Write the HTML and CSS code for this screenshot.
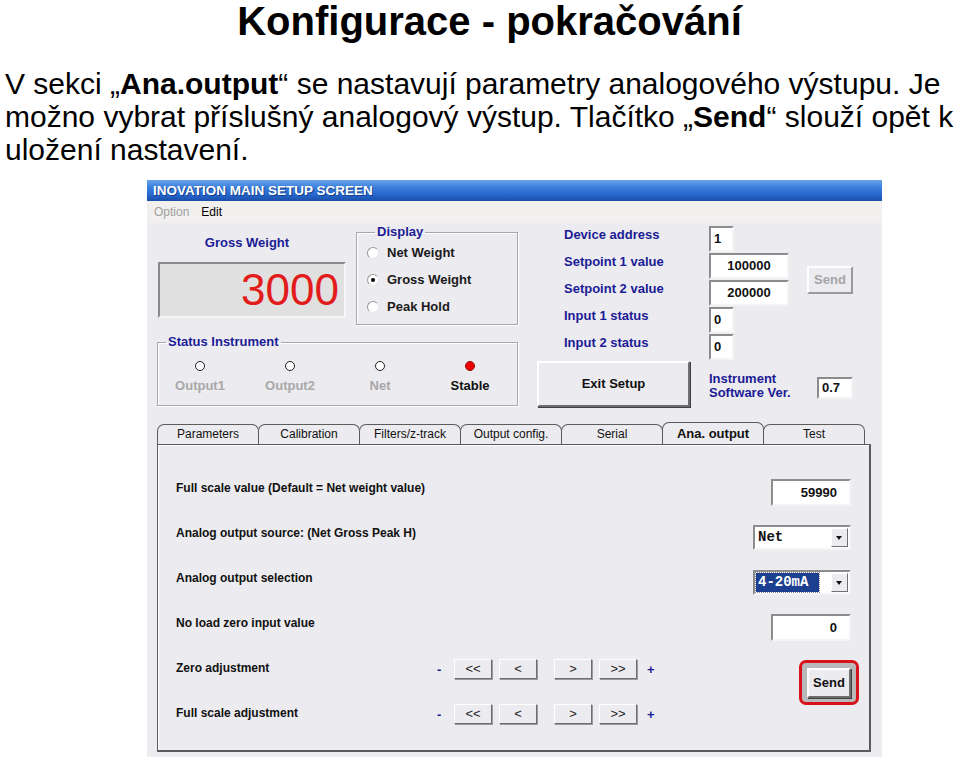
FILE: index.html
```html
<!DOCTYPE html>
<html lang="cs">
<head>
<meta charset="utf-8">
<title>Konfigurace - pokračování</title>
<link rel="stylesheet" href="styles.css">
</head>
<body>
<div class="slide">
  <h1 class="title">Konfigurace - pokračování</h1>
  <p class="lead">V sekci „<b>Ana.output</b>“ se nastavují parametry analogového výstupu. Je<br>možno vybrat příslušný analogový výstup. Tlačítko „<b>Send</b>“ slouží opět k<br>uložení nastavení.</p>

  <div class="window">
    <div class="titlebar">INOVATION MAIN SETUP SCREEN</div>
    <div class="menubar"><span class="dis">Option</span><span>Edit</span></div>
    <div class="client">
      <div class="top">
        <div class="left">
          <div class="row1">
            <div class="gross">
              <div class="glabel">Gross Weight</div>
              <div class="readout">3000</div>
            </div>
            <fieldset class="group display">
              <legend>Display</legend>
              <div class="radio"><span class="rb"></span>Net Weight</div>
              <div class="radio"><span class="rb on"></span>Gross Weight</div>
              <div class="radio"><span class="rb"></span>Peak Hold</div>
            </fieldset>
          </div>
          <fieldset class="group status">
            <legend>Status Instrument</legend>
            <div class="leds">
              <div class="led"><span class="dot"></span><span class="ltxt">Output1</span></div>
              <div class="led"><span class="dot"></span><span class="ltxt">Output2</span></div>
              <div class="led"><span class="dot"></span><span class="ltxt">Net</span></div>
              <div class="led"><span class="dot red"></span><span class="ltxt act">Stable</span></div>
            </div>
          </fieldset>
        </div>
        <div class="right">
          <div class="flabel">Device address</div><div class="box w25">1</div>
          <div class="flabel">Setpoint 1 value</div><div class="box w80 c">100000</div>
          <div class="btn send-dis">Send</div>
          <div class="flabel">Setpoint 2 value</div><div class="box w80 c">200000</div>
          <div class="flabel">Input 1 status</div><div class="box w25">0</div>
          <div class="flabel">Input 2 status</div><div class="box w25">0</div>
          <div class="btn exit">Exit Setup</div>
          <div class="ver">Instrument<br>Software Ver.</div>
          <div class="box verbox">0.7</div>
        </div>
      </div>

      <div class="tabs">
        <div class="tab">Parameters</div>
        <div class="tab">Calibration</div>
        <div class="tab">Filters/z-track</div>
        <div class="tab">Output config.</div>
        <div class="tab">Serial</div>
        <div class="tab active">Ana. output</div>
        <div class="tab">Test</div>
      </div>
      <div class="panel">
        <div class="plabel r1">Full scale value (Default = Net weight value)</div>
        <div class="box pin r1">59990</div>
        <div class="plabel r2">Analog output source: (Net Gross Peak H)</div>
        <div class="select r2"><span class="sval">Net</span><span class="arrow"></span></div>
        <div class="plabel r3">Analog output selection</div>
        <div class="select r3"><span class="sval hl">4-20mA</span><span class="arrow"></span></div>
        <div class="plabel r4">No load zero input value</div>
        <div class="box pin r4">0</div>
        <div class="plabel r5">Zero adjustment</div>
        <div class="adj r5"><span class="sign">-</span><span class="abtn">&lt;&lt;</span><span class="abtn">&lt;</span><span class="abtn sp">&gt;</span><span class="abtn">&gt;&gt;</span><span class="sign plus">+</span></div>
        <div class="plabel r6">Full scale adjustment</div>
        <div class="adj r6"><span class="sign">-</span><span class="abtn">&lt;&lt;</span><span class="abtn">&lt;</span><span class="abtn sp">&gt;</span><span class="abtn">&gt;&gt;</span><span class="sign plus">+</span></div>
        <div class="sendwrap"><div class="btn send">Send</div></div>
      </div>
    </div>
  </div>
</div>
</body>
</html>
```
FILE: styles.css
```css
* { box-sizing: border-box; }
body {
  margin: 0;
  background: #fff;
  font-family: "Liberation Sans", Arial, sans-serif;
  color: #000;
}
.slide { width: 960px; height: 763px; overflow: hidden; }
.title {
  margin: 0;
  padding: 0 0 0 19px;
  text-align: center;
  font-size: 40px;
  font-weight: bold;
  line-height: 42px;
}
.lead {
  margin: 25px 0 0;
  padding-left: 5px;
  font-size: 30px;
  line-height: 33px;
  white-space: nowrap;
}
.window {
  margin: 14px 0 0 147px;
  width: 735px;
  height: 577px;
  background: #ecebef;
}
.titlebar {
  height: 21px;
  background: linear-gradient(to bottom, #6aa4ea 0%, #3a7fdc 35%, #2462c8 75%, #1a4fa8 100%);
  color: #fff;
  font-weight: bold;
  font-size: 13.5px;
  line-height: 21px;
  padding-left: 6px;
  text-shadow: 1px 1px 0 #163e8a;
}
.menubar {
  height: 22px;
  background: #f1f0ee;
  font-size: 12px;
  line-height: 22px;
  padding-left: 7px;
  display: flex;
  gap: 12px;
}
.menubar .dis { color: #a0a0a0; }

.client { font-size: 13px; }
.top { display: flex; padding: 2px 0 0 10px; height: 199px; }
.left { width: 361px; }
.row1 { display: flex; }
.gross { width: 188px; margin-left: 1px; }
.glabel {
  color: #1b1b96;
  font-weight: bold;
  text-align: center;
  margin: 10px 0 0 -10px;
  line-height: 16px;
}
.readout {
  margin-top: 11px;
  height: 56px;
  background: #e0e0e0;
  border: 2px solid;
  border-color: #8a8a8a #f6f6f6 #f6f6f6 #8a8a8a;
  color: #e21b1b;
  font-size: 44px;
  line-height: 52px;
  text-align: right;
  padding-right: 5px;
}
.group {
  margin: 0;
  padding: 0;
  border: 1px solid #a9a9a9;
  box-shadow: inset 1px 1px 0 #fff, 1px 1px 0 #fff;
}
.group legend {
  margin-left: 8px;
  padding: 0 2px;
  color: #1b1b96;
  font-weight: bold;
  font-size: 13px;
  line-height: 14px;
}
.display { margin-left: 10px; width: 162px; height: 100px; padding: 0 0 0 10px; }
.radio { display: flex; align-items: center; height: 27px; font-weight: bold; color: #1a1a1a; }
.rb {
  width: 12px; height: 12px; border-radius: 50%;
  background: #fff;
  border: 1px solid #9a9a9a;
  border-right-color: #e8e8e8; border-bottom-color: #e8e8e8;
  margin-right: 8px;
  position: relative;
}
.rb.on::after {
  content: ""; position: absolute; left: 3px; top: 3px;
  width: 4px; height: 4px; border-radius: 50%; background: #000;
}
.status { margin-top: 10px; height: 71px; width: 361px; }
.leds { display: grid; grid-template-columns: repeat(4, 90px); margin: 12px 0 0 -3px; }
.led { display: flex; flex-direction: column; align-items: center; }
.dot { width: 10px; height: 10px; border-radius: 50%; border: 1px solid #222; background: #fff; }
.dot.red { background: #e00; border-color: #900; }
.ltxt { margin-top: 8px; font-weight: bold; color: #a8a8a8; line-height: 14px; }
.ltxt.act { color: #111; }

.right {
  margin-left: 19px;
  margin-top: 1px;
  display: grid;
  grid-template-columns: 172px 98px 46px;
  grid-template-rows: repeat(5, 27px) 47px;
}
.flabel {
  grid-column: 1;
  padding: 2px 0 0 27px;
  color: #1b1b96;
  font-weight: bold;
  line-height: 14px;
}
.box {
  background: #fff;
  border: 2px solid;
  border-color: #8c8c8c #f4f4f4 #f4f4f4 #8c8c8c;
  font-weight: bold;
  color: #111;
  height: 26px;
  line-height: 22px;
  padding: 0 3px;
}
.right .box { grid-column: 2; }
.w25 { width: 25px; }
.w80 { width: 80px; }
.c { text-align: center; }
.btn {
  background: #ecebef;
  border: 2px solid;
  border-color: #fff #6e6e6e #6e6e6e #fff;
  box-shadow: 1px 1px 0 #404040;
  font-weight: bold;
  text-align: center;
}
.send-dis {
  grid-column: 3; grid-row: 2 / 4;
  align-self: center;
  height: 28px; line-height: 24px;
  color: #a6a6a6;
  border-color: #fff #9a9a9a #9a9a9a #fff;
  box-shadow: none;
}
.exit {
  grid-column: 1; grid-row: 6;
  width: 153px; height: 46px; line-height: 42px;
  color: #111;
}
.ver { grid-column: 2 / 4; grid-row: 6; align-self: center; color: #1b1b96; font-weight: bold; line-height: 14px; margin-top: 2px; }
.right .verbox { grid-column: 3; grid-row: 6; justify-self: end; align-self: center; width: 36px; height: 22px; line-height: 18px; margin-top: 7px; }

.tabs { display: flex; padding-left: 10px; height: 22px; align-items: flex-end; }
.tab {
  width: 102px;
  height: 20px;
  border: 1px solid #5c5c5c;
  border-bottom: none;
  border-radius: 7px 7px 0 0;
  text-align: center;
  font-size: 12px;
  line-height: 19px;
  color: #111;
  background: #ecebef;
  margin-right: -1px;
}
.tab.active { height: 22px; font-weight: bold; font-size: 13px; line-height: 22px; position: relative; z-index: 1; }
.panel {
  margin-left: 10px;
  width: 714px;
  height: 308px;
  border: 1px solid #5a5a5a;
  border-right-width: 2px;
  border-bottom-width: 2px;
  box-shadow: inset 1px 1px 0 #fff;
  display: grid;
  grid-template-columns: 264px 220px 1fr;
  grid-template-rows: repeat(6, 45px);
  padding: 20px 18px 0 18px;
  align-items: center;
}
.plabel { grid-column: 1 / 3; font-weight: bold; font-size: 12px; color: #111; }
.r1 { grid-row: 1; } .r2 { grid-row: 2; } .r3 { grid-row: 3; }
.r4 { grid-row: 4; } .r5 { grid-row: 5; } .r6 { grid-row: 6; }
.plabel.r5, .plabel.r6 { grid-column: 1; }
.pin { grid-column: 3; justify-self: end; width: 80px; height: 27px; line-height: 23px; text-align: right; padding-right: 12px; margin-top: 10px; }
.select {
  grid-column: 3; justify-self: end;
  width: 98px; height: 25px;
  margin-top: 10px;
  background: #fff;
  border: 2px solid;
  border-color: #8c8c8c #f4f4f4 #f4f4f4 #8c8c8c;
  display: flex; align-items: center;
  padding: 0 1px 0 1px;
}
.sval {
  font-family: "Liberation Mono", monospace;
  font-weight: bold;
  font-size: 14px;
  line-height: 19px;
  padding: 0 2px;
  width: 76px;
  color: #111;
}
.sval.hl { background: #1d3f8f; color: #fff; outline: 1px dotted #889; width: 64px; margin-right: 12px; }
.arrow {
  width: 17px; height: 19px;
  margin-left: auto;
  background: #ecebef;
  border: 1px solid;
  border-color: #fff #707070 #707070 #fff;
  position: relative;
}
.arrow::after {
  content: ""; position: absolute; left: 4px; top: 7px;
  border-left: 3.5px solid transparent; border-right: 3.5px solid transparent; border-top: 4px solid #111;
}
.adj { grid-column: 2; display: flex; align-items: center; margin: 3px 0 0 -3px; }
.sign { width: 8px; color: #1b1b96; font-weight: bold; font-size: 13px; }
.abtn {
  width: 38px; height: 20px;
  margin-left: 7px;
  background: #ecebef;
  border: 1px solid;
  border-color: #fff #6e6e6e #6e6e6e #fff;
  box-shadow: 1px 1px 0 #9a9a9a;
  text-align: center;
  font-size: 13px;
  line-height: 17px;
  color: #222;
}
.sign + .abtn { margin-left: 9px; }
.abtn.sp { margin-left: 17px; }
.sign.plus { margin-left: 10px; }
.sendwrap {
  grid-column: 3; grid-row: 5 / 7;
  justify-self: end; align-self: start;
  margin: 15px -8px 0 0;
  width: 60px; height: 45px;
  border: 3px solid #d8121a;
  border-radius: 7px;
  background: #b9b9bb;
  padding: 5px 5px 0 5px;
}
.send { width: 44px; height: 30px; line-height: 26px; color: #111; font-size: 13px; }
```
